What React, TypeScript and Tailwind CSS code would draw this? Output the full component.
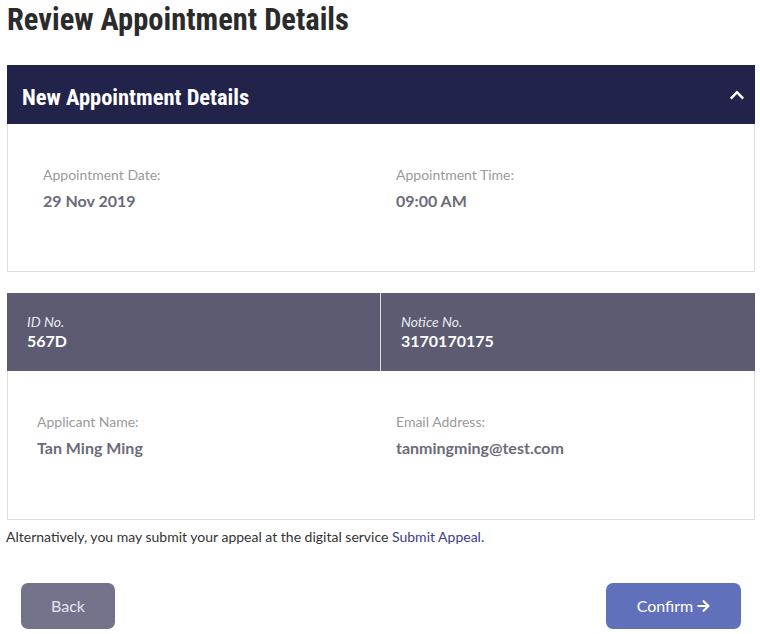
const heading = { fontFamily: 'Roboto, "Liberation Sans", sans-serif' };
const body = { fontFamily: 'Lato, "Liberation Sans", sans-serif' };

function ChevronUp() {
  return (
    <svg viewBox="0 0 448 512" className="w-[16px] h-[16px] fill-white">
      <path d="M240.971 130.524l194.343 194.343c9.373 9.373 9.373 24.569 0 33.941l-22.667 22.667c-9.357 9.357-24.522 9.375-33.901.04L224 227.495 69.255 381.516c-9.379 9.335-24.544 9.317-33.901-.04l-22.667-22.667c-9.373-9.373-9.373-24.569 0-33.941L207.03 130.525c9.372-9.373 24.568-9.373 33.941-.001z" />
    </svg>
  );
}

function ArrowRight() {
  return (
    <svg viewBox="0 0 448 512" className="w-[13px] h-[14px] fill-white">
      <path d="M190.5 66.9l22.2-22.2c9.4-9.4 24.6-9.4 33.9 0L441 239c9.4 9.4 9.4 24.6 0 33.9L246.6 467.3c-9.4 9.4-24.6 9.4-33.9 0l-22.2-22.2c-9.5-9.5-9.3-25 .4-34.3L311.4 296H24c-13.3 0-24-10.7-24-24v-32c0-13.3 10.7-24 24-24h287.4L190.9 101.2c-9.8-9.3-10-24.8-.4-34.3z" />
    </svg>
  );
}

function Field({ label, value }: { label: string; value: string }) {
  return (
    <div className="flex flex-col gap-[7px] px-[15px]">
      <span className="text-[14px] leading-[18px] text-[#9a9a9a]">{label}</span>
      <span className="text-[16px] leading-[20px] font-bold text-[#6b6b78]">{value}</span>
    </div>
  );
}

export default function App() {
  return (
    <main className="w-[760px] h-[634px] bg-white overflow-hidden" style={body}>
      <h1 className="px-[7px] pt-[3px] text-[30.5px] leading-[34px] font-bold font-stretch-condensed text-[#2b2b2b]" style={heading}>
        Review Appointment Details
      </h1>

      <section className="mx-[7px] mt-[28px] w-[748px] border border-[#dddddd]">
        <div className="flex items-center justify-between h-[59px] bg-[#22234a] pl-[15px] pr-[10px] -m-px">
          <h2 className="mt-[6px] text-[22.5px] font-bold font-stretch-condensed text-white" style={heading}>
            New Appointment Details
          </h2>
          <ChevronUp />
        </div>
        <div className="grid grid-cols-2 px-[20px] pt-[43px] h-[148px]">
          <Field label="Appointment Date:" value="29 Nov 2019" />
          <Field label="Appointment Time:" value="09:00 AM" />
        </div>
      </section>

      <section className="mx-[7px] mt-[21px] w-[748px] border border-[#dddddd]">
        <div className="grid grid-cols-2 h-[78px] bg-[#5c5b72] -mx-px -mt-px">
          <div className="flex flex-col justify-center px-[20px] border-r border-[#dcdcdc]">
            <span className="text-[14px] leading-[18px] italic text-[#e8e8ee]">ID No.</span>
            <span className="text-[16px] leading-[20px] font-bold text-white">567D</span>
          </div>
          <div className="flex flex-col justify-center px-[20px]">
            <span className="text-[14px] leading-[18px] italic text-[#e8e8ee]">Notice No.</span>
            <span className="text-[16px] leading-[20px] font-bold text-white">3170170175</span>
          </div>
        </div>
        <div className="grid grid-cols-2 px-[14px] pt-[42px] h-[148px]">
          <Field label="Applicant Name:" value="Tan Ming Ming" />
          <Field label="Email Address:" value="tanmingming@test.com" />
        </div>
      </section>

      <p className="px-[6px] mt-[7px] text-[14px] leading-[20px] text-[#333333]">
        Alternatively, you may submit your appeal at the digital service{' '}
        <a className="text-[#3b3c8c]">Submit Appeal</a>.
      </p>

      <div className="flex justify-between px-[21px] pr-[19px] mt-[36px]">
        <button className="w-[94px] h-[46px] rounded-[7px] bg-[#73738b] text-[16px] text-[#e4e4ec]">Back</button>
        <button className="flex items-center justify-center gap-[4px] w-[135px] h-[46px] rounded-[7px] bg-[#6170bb] text-[16px] text-white">
          Confirm <ArrowRight />
        </button>
      </div>
    </main>
  );
}
